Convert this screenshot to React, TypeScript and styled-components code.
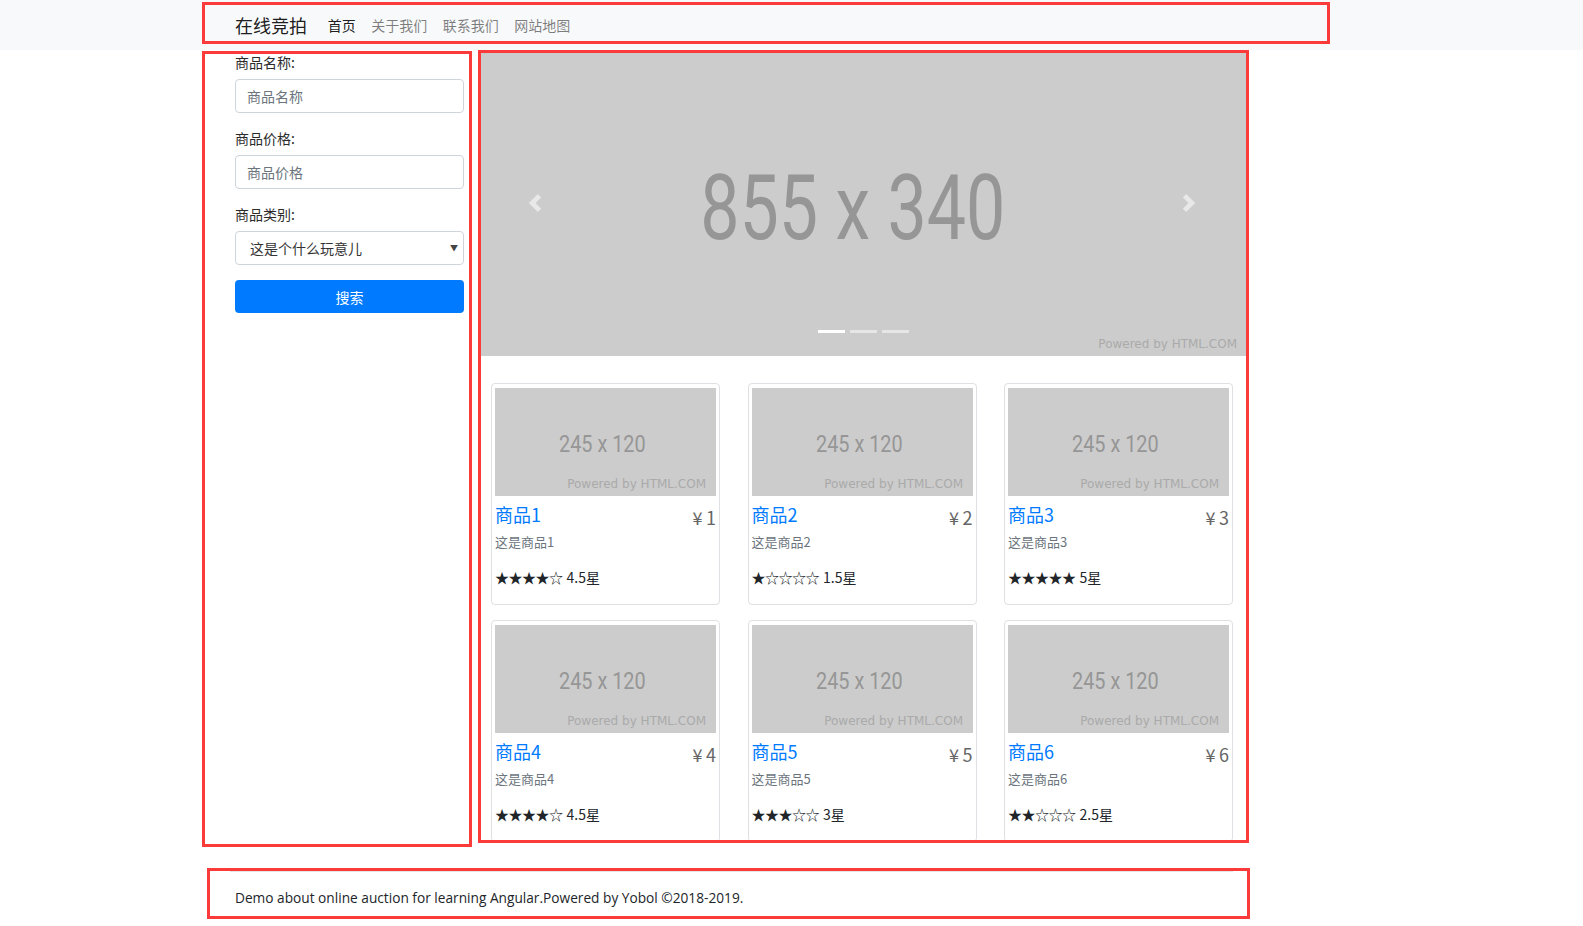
import React from "react";
import styled, { createGlobalStyle } from "styled-components";

const GlobalStyle = createGlobalStyle`
  * { box-sizing: border-box; }
  body {
    margin: 0;
    background: #ffffff;
    color: #212529;
    font-family: "Noto Sans CJK SC", "Noto Sans", sans-serif;
    font-size: 14px;
  }
`;

const Page = styled.div`
  position: relative;
  min-height: 926px;
`;

const Navbar = styled.nav`
  height: 50px;
  background: #f8f9fa;
  display: flex;
  align-items: center;
  padding-left: 235px;
`;

const Brand = styled.a`
  font-size: 18px;
  line-height: 1;
  color: rgba(0, 0, 0, 0.9);
  text-decoration: none;
  margin-right: 13px;
`;

const NavLink = styled.a<{ $active?: boolean }>`
  padding: 0 7.75px;
  font-size: 14px;
  line-height: 1;
  text-decoration: none;
  color: ${(p) => (p.$active ? "rgba(0,0,0,0.9)" : "rgba(0,0,0,0.5)")};
`;

const Layout = styled.div`
  display: grid;
  grid-template-columns: 229px 765px;
  column-gap: 17px;
  padding: 2px 0 0 235px;
`;

const Sidebar = styled.aside``;

const FormGroup = styled.div`
  margin-bottom: 15px;
`;

const Label = styled.label`
  display: block;
  font-size: 14px;
  font-weight: 400;
  line-height: 21px;
  margin-bottom: 6px;
  color: #2b2b2b;
`;

const Input = styled.input`
  display: block;
  width: 100%;
  height: 34px;
  padding: 0 11px;
  border: 1px solid #ced4da;
  border-radius: 4px;
  font-family: inherit;
  font-size: 14px;
  color: #495057;
  background: #fff;
  &::placeholder {
    color: #6c757d;
  }
`;

const SelectWrap = styled.div`
  position: relative;
`;

const Select = styled.select`
  display: block;
  width: 100%;
  height: 34px;
  padding: 0 14px;
  border: 1px solid #ced4da;
  border-radius: 4px;
  font-family: inherit;
  font-size: 14px;
  color: #333;
  background: #fff;
  appearance: none;
  -webkit-appearance: none;
`;

const SelectArrow = styled.span`
  position: absolute;
  right: 6px;
  top: 50%;
  transform: translateY(-55%);
  font-size: 8px;
  color: #444;
  pointer-events: none;
`;

const SearchButton = styled.button`
  display: block;
  width: 100%;
  height: 33px;
  border: none;
  border-radius: 4px;
  background: #007bff;
  color: #fff;
  font-family: inherit;
  font-size: 14px;
`;

const Main = styled.main``;

const Carousel = styled.div`
  position: relative;
  width: 765px;
  height: 304px;
  overflow: hidden;
  svg.slide {
    display: block;
  }
`;

const Control = styled.span<{ $side: "left" | "right" }>`
  position: absolute;
  top: 142px;
  ${(p) => (p.$side === "left" ? "left: 45px;" : "right: 48px;")}
  width: 18px;
  height: 18px;
  display: flex;
`;

const Indicators = styled.ol`
  position: absolute;
  left: 0;
  right: 0;
  bottom: 23px;
  margin: 0;
  padding: 0;
  list-style: none;
  display: flex;
  justify-content: center;
  gap: 5px;
`;

const Indicator = styled.li<{ $active?: boolean }>`
  width: 27px;
  height: 3px;
  background: ${(p) => (p.$active ? "#ffffff" : "rgba(255,255,255,0.5)")};
`;

const ProductGrid = styled.div`
  display: grid;
  grid-template-columns: repeat(3, 229px);
  column-gap: 27.5px;
  row-gap: 15px;
  padding: 27px 13px 0 10px;
`;

const Card = styled.div`
  height: 222px;
  border: 1px solid #dee0e3;
  border-radius: 4px;
  padding: 4px 3px 0;
  svg {
    display: block;
  }
`;

const Caption = styled.div`
  padding-top: 5px;
`;

const TitleRow = styled.div`
  display: flex;
  justify-content: space-between;
  align-items: baseline;
`;

const Title = styled.a`
  font-size: 18px;
  line-height: 26px;
  color: #007bff;
  text-decoration: none;
`;

const Price = styled.span`
  font-size: 18px;
  line-height: 26px;
  color: #666;
  position: relative;
  top: 3px;
`;

const Desc = styled.p`
  margin: 5px 0 0;
  font-size: 13px;
  line-height: 20px;
  color: #6c757d;
`;

const Rating = styled.p`
  margin: 15px 0 0;
  font-size: 14px;
  line-height: 21px;
  color: #212529;
`;

const Stars = styled.span`
  font-size: 14px;
  letter-spacing: -0.5px;
  margin-right: 4px;
`;

const Footer = styled.footer`
  margin: 29px 0 0 230px;
  width: 1003px;
  border-top: 1px solid #e5e5e5;
  padding: 15px 0 0 5px;
  font-family: "Open Sans", "Noto Sans", sans-serif;
  font-size: 13.7px;
  line-height: 21px;
  color: #212529;
`;

const Annotation = styled.div<{ $x: number; $y: number; $w: number; $h: number }>`
  position: absolute;
  left: ${(p) => p.$x}px;
  top: ${(p) => p.$y}px;
  width: ${(p) => p.$w}px;
  height: ${(p) => p.$h}px;
  border: 3px solid #fb3a3a;
  pointer-events: none;
`;

const products = [
  { id: 1, price: 1, rating: 4.5 },
  { id: 2, price: 2, rating: 1.5 },
  { id: 3, price: 3, rating: 5 },
  { id: 4, price: 4, rating: 4.5 },
  { id: 5, price: 5, rating: 3 },
  { id: 6, price: 6, rating: 2.5 },
];

const Chevron = ({ dir }: { dir: "left" | "right" }) => (
  <svg width="18" height="18" viewBox="0 0 8 8">
    <path
      fill="rgba(255,255,255,0.55)"
      d={
        dir === "left"
          ? "M5.25 0l-4 4 4 4 1.5-1.5L4.25 4l2.5-2.5L5.25 0z"
          : "M2.75 0l-1.5 1.5L3.75 4l-2.5 2.5L2.75 8l4-4-4-4z"
      }
    />
  </svg>
);

const SlideImage = () => (
  <svg className="slide" width="765" height="304" viewBox="0 0 855 340" preserveAspectRatio="none">
    <rect width="855" height="340" fill="#cccccc" />
    <text
      x="245"
      y="209"
      fontFamily="Roboto, 'Liberation Sans', sans-serif"
      fontSize="102"
      fill="#969696"
      textLength="341"
      lengthAdjust="spacingAndGlyphs"
    >
      855 x 340
    </text>
    <text
      x="690"
      y="331"
      fontFamily="'DejaVu Sans', sans-serif"
      fontSize="14"
      fill="#aaaaaa"
      textLength="155"
      lengthAdjust="spacingAndGlyphs"
    >
      Powered by HTML.COM
    </text>
  </svg>
);

const Thumb = () => (
  <svg width="221" height="108" viewBox="0 0 245 120" preserveAspectRatio="none">
    <rect width="245" height="120" fill="#cccccc" />
    <text
      x="71"
      y="71"
      fontFamily="Roboto, 'Liberation Sans', sans-serif"
      fontSize="26"
      fill="#969696"
      textLength="96"
      lengthAdjust="spacingAndGlyphs"
    >
      245 x 120
    </text>
    <text
      x="80"
      y="111"
      fontFamily="'DejaVu Sans', sans-serif"
      fontSize="14"
      fill="#aaaaaa"
      textLength="154"
      lengthAdjust="spacingAndGlyphs"
    >
      Powered by HTML.COM
    </text>
  </svg>
);

const starString = (r: number) => {
  const full = Math.floor(r);
  return "★".repeat(full) + "☆".repeat(5 - full);
};

export default function App() {
  return (
    <Page>
      <GlobalStyle />
      <Navbar>
        <Brand href="#">在线竞拍</Brand>
        <NavLink $active href="#">首页</NavLink>
        <NavLink href="#">关于我们</NavLink>
        <NavLink href="#">联系我们</NavLink>
        <NavLink href="#">网站地图</NavLink>
      </Navbar>

      <Layout>
        <Sidebar>
          <FormGroup>
            <Label>商品名称:</Label>
            <Input placeholder="商品名称" />
          </FormGroup>
          <FormGroup>
            <Label>商品价格:</Label>
            <Input placeholder="商品价格" />
          </FormGroup>
          <FormGroup>
            <Label>商品类别:</Label>
            <SelectWrap>
              <Select defaultValue="a">
                <option value="a">这是个什么玩意儿</option>
              </Select>
              <SelectArrow>▼</SelectArrow>
            </SelectWrap>
          </FormGroup>
          <SearchButton>搜索</SearchButton>
        </Sidebar>

        <Main>
          <Carousel>
            <SlideImage />
            <Control $side="left">
              <Chevron dir="left" />
            </Control>
            <Control $side="right">
              <Chevron dir="right" />
            </Control>
            <Indicators>
              <Indicator $active />
              <Indicator />
              <Indicator />
            </Indicators>
          </Carousel>

          <ProductGrid>
            {products.map((p) => (
              <Card key={p.id}>
                <Thumb />
                <Caption>
                  <TitleRow>
                    <Title href="#">商品{p.id}</Title>
                    <Price>¥&thinsp;{p.price}</Price>
                  </TitleRow>
                  <Desc>这是商品{p.id}</Desc>
                  <Rating>
                    <Stars>{starString(p.rating)}</Stars>
                    {p.rating}星
                  </Rating>
                </Caption>
              </Card>
            ))}
          </ProductGrid>
        </Main>
      </Layout>

      <Footer>Demo about online auction for learning Angular.Powered by Yobol ©2018-2019.</Footer>

      <Annotation $x={202} $y={2} $w={1128} $h={42} />
      <Annotation $x={202} $y={51} $w={270} $h={796} />
      <Annotation $x={478} $y={50} $w={771} $h={793} />
      <Annotation $x={207} $y={868} $w={1043} $h={51} />
    </Page>
  );
}
